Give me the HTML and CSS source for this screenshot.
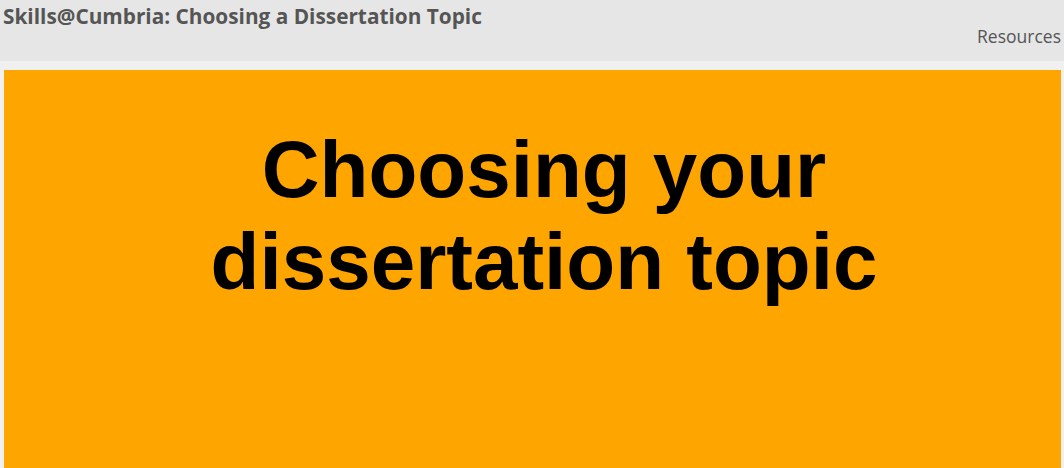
FILE: index.html
```html
<!DOCTYPE html>
<html>
<head>
  <meta charset="UTF-8">
  <title>Skills@Cumbria: Choosing a Dissertation Topic</title>
  <link rel="stylesheet" href="styles.css">
</head>
<body>
  <header class="site-header">
    <div class="site-title">Skills@Cumbria: Choosing a Dissertation Topic</div>
    <nav class="site-nav">
      <a href="#">Resources</a>
    </nav>
  </header>

  <main class="slide">
    <h1>Choosing your dissertation topic</h1>
  </main>
</body>
</html>
```

FILE: styles.css
```css
body {
  margin: 0;
  padding: 0;
  background-color: #f0f0f0;
  font-family: 'Open Sans', sans-serif;
  color: #555;
}
.site-header {
  display: flex;
  justify-content: space-between;
  height: 61px;
  background-color: #e6e6e6;
  margin-bottom: 9px;
}
.site-title {
  padding: 2px 0 0 3px;
  font-size: 20.8px;
  font-weight: 700;
  color: #555;
}
.site-nav {
  display: flex;
  align-items: flex-end;
  padding: 0 3px 13px 0;
}
.site-nav a {
  font-size: 17.5px;
  color: #555;
  text-decoration: none;
}
.slide {
  margin: 0 3px 0 4px;
  height: 398px;
  background-color: #ffa500;
  overflow: hidden;
}
h1 {
  margin: 0.67em 0 0;
  padding-left: 23px;
  text-align: center;
  font-family: 'Liberation Sans', Arial, sans-serif;
  font-size: 80px;
  font-weight: 700;
  color: #000;
}
```
